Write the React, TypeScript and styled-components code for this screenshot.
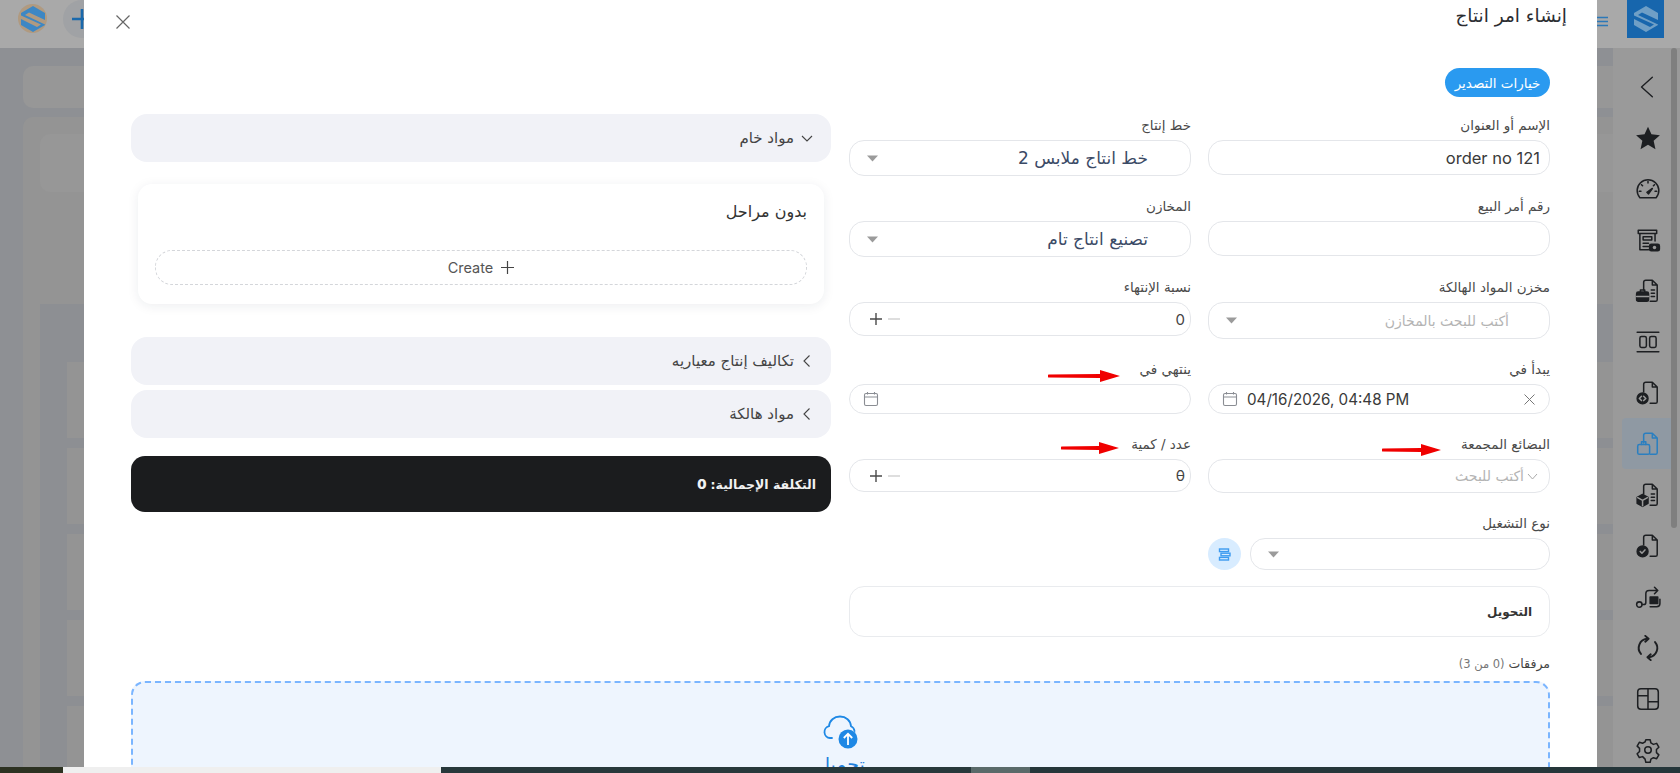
import React from "react";
import styled, { createGlobalStyle } from "styled-components";

const ARABIC = `"DejaVu Sans", "Noto Sans", sans-serif`;
const LATIN = `Inter, "DejaVu Sans", sans-serif`;

const GlobalStyle = createGlobalStyle`
  html, body {
    margin: 0;
    padding: 0;
    height: 100%;
    overflow: hidden;
    background: #8e9094;
  }
  * { box-sizing: border-box; }
`;

const Logo = ({ color }: { color: string }) => (
  <svg width="26" height="28" viewBox="0 0 26 28" fill={color}>
    <path d="M13 1 25 8v7L9 7.5 5 10l20 9.5V20L13 27 1 20v-6l16 8 4-2.500L1 10.500V8z" />
  </svg>
);

const ic = { width: 26, height: 26, viewBox: "0 0 24 24", fill: "none", stroke: "currentColor", strokeWidth: 1.4, strokeLinecap: "round", strokeLinejoin: "round" } as const;

const DocShape = () => <path d="M10 2h6l4.500 4.500V20a1.500 1.500 0 0 1-1.500 1.500h-5M8 11V4a2 2 0 0 1 2-2M16 2v4.500h4.500" />;

const sideIcons: React.ReactNode[] = [
  <svg {...ic} strokeWidth={1.3} key="back"><path d="M16 3 6 12l10 9" /></svg>,
  <svg {...ic} fill="currentColor" stroke="none" key="star"><path d="M12 1.500l3.200 7.100 7.800.8-5.800 5.200 1.700 7.700L12 18.300l-6.900 4 1.700-7.700L1 9.400l7.800-.8z" /></svg>,
  <svg {...ic} key="gauge"><path d="M4.500 20a10 10 0 1 1 15 0zM12 5v1.500M6 8l1 1M18 8l-1 1M4 14h1.500M20 14h-1.500" /><path d="M11 15l5-3.500-3.500 5z" fill="currentColor" /></svg>,
  <svg {...ic} key="store"><path d="M3 3h17v3H3zM4.500 6v15h8M18.500 6v7M7.500 9h8v3h-8zM7.500 15h5M7.500 18h5" /><rect x="13.500" y="16" width="9" height="6" rx="1.500" fill="currentColor" /><circle cx="18" cy="19" r="1.600" fill="#9a9a9a" stroke="none" /></svg>,
  <svg {...ic} key="docbag"><DocShape /><path d="M15 11h3M15 14h3M15 17h3" /><rect x="1.500" y="13" width="11" height="8.500" rx="1.500" fill="currentColor" /><path d="M5 13v-2h4v2" /><path d="M1.500 17h11" stroke="#9a9a9a" /></svg>,
  <svg {...ic} key="columns"><path d="M2 3h20M2 21h20" /><rect x="4.500" y="7" width="6" height="10" rx="1.500" /><rect x="13.500" y="7" width="6" height="10" rx="1.500" /></svg>,
  <svg {...ic} key="doccode"><DocShape /><circle cx="7" cy="17" r="5" fill="currentColor" /><path d="M6 15l-2 2 2 2M8 15l2 2-2 2" stroke="#9a9a9a" /></svg>,
  <svg {...ic} key="active"><DocShape /><rect x="2.500" y="12.500" width="11" height="9" rx="1.500" /><path d="M6 12.500V10h4v2.500" /></svg>,
  <svg {...ic} key="doccube"><DocShape /><path d="M15 11h3M15 14h3M15 17h3" /><path d="M7 11.500l5 2.800v5.400L7 22.500l-5-2.800v-5.400z" fill="currentColor" /><path d="M2.500 14.500 7 17l4.500-2.500M7 17v5" stroke="#9a9a9a" /></svg>,
  <svg {...ic} key="doccheck"><DocShape /><circle cx="7" cy="17" r="5" fill="currentColor" /><path d="M4.800 17l1.600 1.600 2.800-3" stroke="#9a9a9a" /></svg>,
  <svg {...ic} key="route"><circle cx="4" cy="19" r="2.500" /><path d="M6.500 19H8a2 2 0 0 0 2-2V9a3 3 0 0 1 3-3h8M18 3l3 3-3 3" /><rect x="14" y="12" width="7" height="6" fill="currentColor" /><path d="M23 14v4a3 3 0 0 1-3 3h-6" /></svg>,
  <svg {...ic} strokeWidth={1.8} key="refresh"><path d="M11 3.500A8.500 8.500 0 0 0 5.500 17.500M13 20.500A8.500 8.500 0 0 0 18.500 6.500" /><path d="M9.500.8l3 2.700-3 2.700M14.500 17.800l-3 2.700 3 2.700" /></svg>,
  <svg {...ic} key="layout"><rect x="2.500" y="2.500" width="19" height="19" rx="3" /><path d="M2.500 9h9.500M12 2.500v19M12 14.500h9.500" /></svg>,
  <svg {...ic} key="gear"><circle cx="12" cy="12" r="3" /><path d="M10 2.500h4l.7 3 2.300 1.300 3-.9 2 3.500-2.200 2.100v2.900l2.200 2.100-2 3.500-3-.9-2.300 1.300-.7 3h-4l-.7-3L7 18.100l-3 .9-2-3.500 2.200-2.100v-2.900L2 8.400l2-3.500 3 .9 2.300-1.300z" /></svg>,
];

const RedArrow = ({ length, gap, drop }: { length: number; gap: number; drop: number }) => (
  <ArrowMark $gap={gap} $drop={drop} width={length} height="14" viewBox={`0 0 ${length} 14`}>
    <path d={`M1 5.500 ${length - 20} 5V1L${length} 7 ${length - 20} 13V9L1 8.500a1.500 1.500 0 0 1 0-3z`} fill="#f00000" />
  </ArrowMark>
);

const CalendarIcon = () => (
  <svg width="16" height="16" viewBox="0 0 16 16" fill="none" stroke="#8a8d93" strokeWidth="1.100">
    <rect x="1.500" y="2.500" width="13" height="12" rx="1.500" />
    <path d="M1.500 6h13M4.500 1v2.500M11.500 1v2.500" />
  </svg>
);

const Caret = () => (
  <svg width="11" height="7" viewBox="0 0 11 7"><path d="M0 .5h11L5.500 6.500z" fill="#9b9b9b" /></svg>
);

const Stepper = () => (
  <StepperBox>
    <svg width="14" height="14" viewBox="0 0 14 14" stroke="#4a4a4a" strokeWidth="1.400"><path d="M7 1v12M1 7h12" /></svg>
    <svg width="14" height="14" viewBox="0 0 14 14" stroke="#d0d0d0" strokeWidth="1.400"><path d="M1 7h12" /></svg>
  </StepperBox>
);

const Chevron = ({ open }: { open?: boolean }) => (
  <svg width="14" height="14" viewBox="0 0 14 14" fill="none" stroke="#444" strokeWidth="1.100">
    {open ? <path d="M2 5l5 5 5-5" /> : <path d="M9.500 1.500 4 7l5.500 5.500" />}
  </svg>
);

export default function App() {
  return (
    <Page>
      <GlobalStyle />
      <TopBar>
        <RoundLogo><Logo color="#3d87c4" /></RoundLogo>
        <PlusButton>
          <svg width="22" height="22" viewBox="0 0 22 22" stroke="#1a69ac" strokeWidth="2.600"><path d="M11 1v20M1 11h20" /></svg>
        </PlusButton>
        <Spacer />
        <Burger>
          <svg width="11" height="11" viewBox="0 0 11 11" stroke="#2c78b8" strokeWidth="1.300"><path d="M0 1.500h11M0 5.500h11M0 9.500h11" /></svg>
        </Burger>
        <LogoTile><Logo color="#6f9fc6" /></LogoTile>
      </TopBar>

      <Middle>
        <Backdrop>
          <BackCard />
          <BackPanel>
            <BackInner />
            <BackTable>
              <BackRow /><BackRow /><BackRow /><BackRow /><BackRow />
            </BackTable>
          </BackPanel>
        </Backdrop>
        <Sidebar>
          {sideIcons.map((icon, i) => (
            <SideItem key={i} $active={i === 7}>{icon}</SideItem>
          ))}
        </Sidebar>
        <ScrollTrack><ScrollThumb /></ScrollTrack>
      </Middle>

      <Taskbar>
        <TaskPart $w="63px" $c="#2d3222" />
        <TaskPart $w="378px" $c="#efefef" />
        <TaskPart $w="530px" $c="#27383b" />
        <TaskPart $w="59px" $c="#5a6a6a" />
        <TaskPart $w="650px" $c="#25363a" />
      </Taskbar>

      <Modal dir="rtl">
        <Header>
          <Title>إنشاء امر انتاج</Title>
          <CloseButton>
            <svg width="14" height="14" viewBox="0 0 14 14" stroke="#666" strokeWidth="1.200"><path d="M.5.5l13 13M13.500.5l-13 13" /></svg>
          </CloseButton>
        </Header>

        <Body>
          <ExportButton>خيارات التصدير</ExportButton>
          <Columns>
            <FormGrid>
              <Field>
                <Label>الإسم أو العنوان</Label>
                <Control $h={35}><NameValue>order no 121</NameValue></Control>
              </Field>
              <Field>
                <Label>خط إنتاج</Label>
                <Control $h={36}>
                  <SelectValue>خط انتاج ملابس 2</SelectValue>
                  <Caret />
                </Control>
              </Field>

              <Field>
                <Label>رقم أمر البيع</Label>
                <Control $h={35} />
              </Field>
              <Field>
                <Label>المخازن</Label>
                <Control $h={36}>
                  <SelectValue>تصنيع انتاج تام</SelectValue>
                  <Caret />
                </Control>
              </Field>

              <Field>
                <Label>مخزن المواد الهالكة</Label>
                <Control $h={37}>
                  <Placeholder $inset={23}>أكتب للبحث بالمخازن</Placeholder>
                  <Caret />
                </Control>
              </Field>
              <Field>
                <Label>نسبة الإنتهاء</Label>
                <Control $h={34}>
                  <NumberValue>0</NumberValue>
                  <Stepper />
                </Control>
              </Field>

              <Field>
                <Label>يبدأ في</Label>
                <Control $h={30}>
                  <ClearMark>
                    <svg width="11" height="11" viewBox="0 0 11 11" stroke="#777" strokeWidth="1"><path d="M.5.5l10 10M10.500.5l-10 10" /></svg>
                  </ClearMark>
                  <DateValue dir="ltr">
                    <CalendarIcon />
                    <span>04/16/2026, 04:48 PM</span>
                  </DateValue>
                </Control>
              </Field>
              <Field>
                <Label>
                  ينتهي في
                  <RedArrow length={72} gap={20} drop={14} />
                </Label>
                <Control $h={30}>
                  <Grow />
                  <EndCalendar><CalendarIcon /></EndCalendar>
                </Control>
              </Field>

              <Field>
                <Label>
                  البضائع المجمعة
                  <RedArrow length={59} gap={20} drop={11} />
                </Label>
                <Control $h={34}>
                  <SearchChevron>
                    <svg width="11" height="7" viewBox="0 0 11 7" fill="none" stroke="#aaa" strokeWidth="1"><path d="M1 1l4.500 5L10 1" /></svg>
                  </SearchChevron>
                  <Placeholder $inset={3}>أكتب للبحث</Placeholder>
                </Control>
              </Field>
              <Field>
                <Label>
                  عدد / كمية
                  <RedArrow length={58} gap={12} drop={8} />
                </Label>
                <Control $h={33}>
                  <NumberValue>θ</NumberValue>
                  <Stepper />
                </Control>
              </Field>

              <Field>
                <Label>نوع التشغيل</Label>
                <OperationRow>
                  <Control $h={32}>
                    <Grow />
                    <Caret />
                  </Control>
                  <RoundAction>
                    <svg width="13" height="13" viewBox="0 0 13 13" fill="none" stroke="#3d9bf0" strokeWidth="1.400">
                      <rect x="1.500" y="1" width="9" height="2.600" />
                      <rect x="3" y="5.200" width="9" height="2.600" />
                      <rect x="1.500" y="9.400" width="9" height="2.600" />
                    </svg>
                  </RoundAction>
                </OperationRow>
              </Field>
              <div />

              <TransferBox>التحويل</TransferBox>
            </FormGrid>

            <SideColumn>
              <Accordion>
                <Chevron open />
                مواد خام
              </Accordion>
              <StagesCard>
                <StagesTitle>بدون مراحل</StagesTitle>
                <CreateButton dir="ltr">
                  <svg width="13" height="13" viewBox="0 0 13 13" stroke="#444" strokeWidth="1.200"><path d="M6.500 0v13M0 6.500h13" /></svg>
                  <span>Create</span>
                </CreateButton>
              </StagesCard>
              <AccordionGroup>
                <Accordion>
                  <Chevron />
                  تكاليف إنتاج معياريه
                </Accordion>
                <Accordion>
                  <Chevron />
                  مواد هالكة
                </Accordion>
              </AccordionGroup>
              <TotalBar>التكلفة الإجمالية: <strong>0</strong></TotalBar>
            </SideColumn>
          </Columns>

          <AttachLabel>مرفقات <span>(0 من 3)</span></AttachLabel>
          <DropZone>
            <svg width="36" height="35" viewBox="0 0 36 35" fill="none">
              <path d="M9 23H7a6 6 0 0 1-1-11.800C6.500 5.500 11 1.500 17 1.500s10.500 4 11 9.700a6 6 0 0 1 3.500 4.800" stroke="#1e88e5" strokeWidth="1.800" strokeLinecap="round" />
              <circle cx="25" cy="24" r="9.500" fill="#1e88e5" />
              <path d="M25 30v-11M20.800 23l4.200-4.200 4.200 4.200" stroke="#fff" strokeWidth="1.800" fill="none" />
            </svg>
            <UploadText>تحميل</UploadText>
          </DropZone>
        </Body>
      </Modal>
    </Page>
  );
}

const Page = styled.div`
  position: relative;
  height: 773px;
  overflow: hidden;
  display: flex;
  flex-direction: column;
  background: #8e9094;
`;

const TopBar = styled.div`
  height: 48px;
  flex: none;
  display: flex;
  align-items: flex-start;
  background: #a9a9a9;
  padding-left: 18px;
`;

const RoundLogo = styled.div`
  width: 29px;
  height: 29px;
  margin-top: 4px;
  display: flex;
  align-items: center;
  justify-content: center;
  border-radius: 50%;
  background: #b09a80;
`;

const PlusButton = styled.div`
  width: 38px;
  height: 38px;
  margin: 0 0 0 16px;
  display: flex;
  align-items: center;
  justify-content: center;
  border-radius: 50%;
  background: #a0a2a5;
`;

const Spacer = styled.div`
  flex: 1;
`;

const Burger = styled.div`
  margin: 13px 19px 0 0;
`;

const LogoTile = styled.div`
  width: 37px;
  height: 38px;
  margin-right: 16px;
  display: flex;
  align-items: center;
  justify-content: center;
  background: #1766ad;
`;

const Middle = styled.div`
  flex: 1;
  min-height: 0;
  display: flex;
`;

const Backdrop = styled.div`
  width: 1613px;
  flex: none;
  padding: 18px 0 0 23px;
  display: flex;
  flex-direction: column;
  gap: 9px;
  overflow: hidden;
`;

const BackCard = styled.div`
  height: 42px;
  flex: none;
  border-radius: 10px 0 0 10px;
  background: #979797;
`;

const BackPanel = styled.div`
  flex: 1;
  padding: 17px 0 0 17px;
  border-radius: 10px 0 0 0;
  background: #949494;
`;

const BackInner = styled.div`
  height: 58px;
  border-radius: 10px 0 0 10px;
  background: #979797;
`;

const BackTable = styled.div`
  margin-top: 112px;
  padding: 58px 0 0 27px;
  height: 470px;
  display: flex;
  flex-direction: column;
  gap: 10px;
  background: #8d8f93;
`;

const BackRow = styled.div`
  height: 76px;
  flex: none;
  background: #949494;
`;

const Sidebar = styled.nav`
  flex: 1;
  display: flex;
  flex-direction: column;
  align-items: flex-end;
  padding-top: 13px;
  background: #9a9a9a;
  color: #1d1f22;
`;

const SideItem = styled.div<{ $active?: boolean }>`
  width: 49px;
  height: 51px;
  flex: none;
  display: flex;
  align-items: center;
  justify-content: center;
  padding-left: 2px;
  border-radius: 4px 0 0 4px;
  background: ${(p) => (p.$active ? "#8f99a3" : "transparent")};
  color: ${(p) => (p.$active ? "#2a7fc0" : "inherit")};
`;

const ScrollTrack = styled.div`
  width: 9px;
  flex: none;
  background: #9a9a9a;
`;

const ScrollThumb = styled.div`
  width: 6px;
  height: 480px;
  border-radius: 3px;
  background: #7f7f7f;
`;

const Taskbar = styled.div`
  height: 6px;
  flex: none;
  display: flex;
`;

const TaskPart = styled.div<{ $w: string; $c: string }>`
  width: ${(p) => p.$w};
  flex: none;
  background: ${(p) => p.$c};
`;

/* the dialog lies over the dimmed page */
const Modal = styled.div`
  position: absolute;
  top: 0;
  left: 84px;
  width: 1513px;
  height: 767px;
  overflow: hidden;
  background: #fff;
  font-family: ${ARABIC};
`;

const Header = styled.header`
  height: 34px;
  padding: 0 30px;
  display: flex;
  justify-content: space-between;
`;

const Title = styled.h2`
  margin: 4px 0 0;
  font-size: 18.500px;
  line-height: 24px;
  font-weight: 400;
  color: #2b2d31;
`;

const CloseButton = styled.div`
  margin: 14px 0 0 2px;
  width: 14px;
  height: 14px;
`;

const Body = styled.div`
  padding: 34px 47px 0;
`;

const ExportButton = styled.button`
  display: block;
  width: 105px;
  height: 29px;
  padding: 0;
  border: 0;
  border-radius: 15px;
  background: #2a9af0;
  color: #fff;
  font-family: ${ARABIC};
  font-size: 13.500px;
`;

const Columns = styled.div`
  margin-top: 19px;
  display: grid;
  grid-template-columns: 701px 700px;
  column-gap: 18px;
`;

const FormGrid = styled.div`
  display: grid;
  grid-template-columns: 342px 342px;
  column-gap: 17px;
  row-gap: 21px;
  align-content: start;
`;

const Field = styled.div`
  min-width: 0;
`;

const Label = styled.label`
  height: 18px;
  margin-bottom: 6px;
  display: flex;
  align-items: center;
  font-size: 13.500px;
  line-height: 18px;
  color: #4a4a4a;
`;

const ArrowMark = styled.svg<{ $gap: number; $drop: number }>`
  margin: ${(p) => p.$drop}px ${(p) => p.$gap}px 0 0;
  flex: none;
`;

const Control = styled.div<{ $h: number }>`
  flex: 1;
  height: ${(p) => p.$h}px;
  padding: 0 17px;
  display: flex;
  align-items: center;
  justify-content: space-between;
  border: 1px solid #e4e6ea;
  border-radius: 15px;
  background: #fff;
`;

const NameValue = styled.span`
  font-family: ${LATIN};
  font-size: 16.500px;
  color: #3a3a3a;
  margin-right: -8px;
`;

const SelectValue = styled.span`
  margin-right: 25px;
  font-size: 17px;
  color: #3b4a66;
`;

const Placeholder = styled.span<{ $inset: number }>`
  margin-right: ${(p) => p.$inset}px;
  flex: 1;
  font-size: 14px;
  color: #b4b4b4;
`;

const NumberValue = styled.span`
  margin-right: -12px;
  font-family: ${LATIN};
  font-size: 15px;
  color: #444;
`;

const StepperBox = styled.div`
  margin-left: 2px;
  display: flex;
  flex-direction: row-reverse;
  align-items: center;
  gap: 4px;
`;

const DateValue = styled.div`
  margin-left: -4px;
  display: flex;
  align-items: center;
  gap: 9px;
  font-family: ${LATIN};
  font-size: 15.200px;
  color: #3a3a3a;
  white-space: nowrap;
`;

const EndCalendar = styled.span`
  display: flex;
  margin-left: -4px;
`;

const ClearMark = styled.span`
  display: flex;
  margin-right: -3px;
`;

const Grow = styled.div`
  flex: 1;
`;

const SearchChevron = styled.span`
  display: flex;
  margin-right: -6px;
`;

const OperationRow = styled.div`
  display: flex;
  align-items: center;
  gap: 9px;
`;

const RoundAction = styled.div`
  width: 33px;
  height: 32px;
  flex: none;
  display: flex;
  align-items: center;
  justify-content: center;
  border-radius: 50%;
  background: #d8ecff;
`;

const TransferBox = styled.div`
  grid-column: 1 / -1;
  height: 51px;
  margin-top: -5px;
  padding: 0 17px;
  display: flex;
  align-items: center;
  border: 1px solid #e9ebee;
  border-radius: 15px;
  font-size: 12px;
  font-weight: 700;
  color: #333;
`;

const SideColumn = styled.div`
  display: flex;
  flex-direction: column;
  margin-top: -2px;
`;

const Accordion = styled.div`
  height: 48px;
  padding: 0 17px;
  display: flex;
  align-items: center;
  gap: 6px;
  border-radius: 16px;
  background: #f1f2f7;
  font-size: 15px;
  color: #444;
`;

const StagesCard = styled.div`
  margin: 22px 7px 0;
  height: 120px;
  padding: 17px 17px 0;
  border-radius: 14px;
  background: #fff;
  box-shadow: 0 2px 12px rgba(30, 40, 60, 0.08);
`;

const StagesTitle = styled.div`
  font-size: 16px;
  line-height: 22px;
  color: #333;
`;

const CreateButton = styled.div`
  margin-top: 27px;
  height: 35px;
  display: flex;
  flex-direction: row-reverse;
  align-items: center;
  justify-content: center;
  gap: 8px;
  border: 1px dashed #d4d6da;
  border-radius: 17px;
  font-family: ${LATIN};
  font-size: 14.500px;
  color: #555;
`;

const AccordionGroup = styled.div`
  margin-top: 33px;
  display: flex;
  flex-direction: column;
  gap: 5px;
`;

const TotalBar = styled.div`
  margin-top: 18px;
  height: 56px;
  padding: 0 15px;
  display: flex;
  align-items: center;
  gap: 4px;
  border-radius: 14px;
  background: #1b1c1e;
  color: #f2f2f2;
  font-size: 12.500px;
  font-weight: 700;

  strong {
    font-family: ${LATIN};
    font-size: 13px;
  }
`;

const AttachLabel = styled.div`
  margin-top: 18px;
  height: 18px;
  font-size: 12.500px;
  line-height: 18px;
  color: #444;

  span {
    font-size: 11.500px;
    color: #777;
  }
`;

const DropZone = styled.div`
  margin-top: 8px;
  height: 130px;
  padding-top: 32px;
  display: flex;
  flex-direction: column;
  align-items: center;
  border: 2px dashed #7ab5ff;
  border-radius: 14px;
  background: #eef5fe;
`;

const UploadText = styled.div`
  margin-top: 3px;
  font-size: 19px;
  font-weight: 500;
  color: #1e80dc;
`;
